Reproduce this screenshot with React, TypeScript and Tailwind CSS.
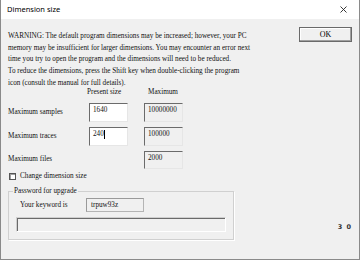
import React from 'react'

const serif = { fontFamily: '"Liberation Serif", "Times New Roman", serif' }

function Field({
  value,
  white,
  caret,
  h = 'h-[19px]',
}: {
  value: string
  white?: boolean
  caret?: boolean
  h?: string
}) {
  return (
    <div
      className={`w-[39px] ${h} border border-t-[#6b6b6b] border-l-[#6b6b6b] border-r-[#e6e6e6] border-b-[#e6e6e6] pl-[3px] pt-[2.5px] leading-[9px] flex items-start ${
        white ? 'bg-white' : 'bg-[#f0f0f0]'
      }`}
    >
      <span>{value}</span>
      {caret && <span className="w-[1px] h-[9px] bg-black ml-[0.5px]" />}
    </div>
  )
}

export default function App() {
  return (
    <div
      className="w-[360px] h-[260px] bg-[#f0f0f0] border-l border-r border-b border-[#8a8a8a] flex flex-col text-[#111] text-[7.2px] overflow-hidden"
      style={serif}
    >
      {/* TITLE */}

      <div
        className="h-[19px] bg-white flex items-center justify-between pl-[6px] pr-[12px] shrink-0"
        style={{ fontFamily: '"Noto Sans", sans-serif' }}
      >
        <span className="text-[7.5px] text-black">Dimension size</span>
        <svg width="7" height="7" viewBox="0 0 7 7">
          <path d="M0.5 0.5 L6.5 6.5 M6.5 0.5 L0.5 6.5" stroke="#222" strokeWidth="0.9" />
        </svg>
      </div>

      {/* BODY */}

      <div className="pl-[7px] flex flex-col">

        <div className="flex items-start pt-[8px]">
          <div className="w-[291px] pt-[4.25px] leading-[11.5px] whitespace-nowrap">
            <div>WARNING: The default program dimensions may be increased; however, your PC</div>
            <div>memory may be insufficient for larger dimensions. You may encounter an error next</div>
            <div>time you try to open the program and the dimensions will need to be reduced.</div>
            <div className="mt-[0.5px]">To reduce the dimensions, press the Shift key when double-clicking the program</div>
            <div>icon (consult the manual for full details).</div>
          </div>
          <button className="w-[53px] h-[15px] border border-[#6a6a6a] bg-[#f0f0f0] shadow-[inset_-1px_-1px_0_#a0a0a0,inset_1px_1px_0_#ffffff] text-[8px] leading-[13px] text-black">
            OK
          </button>
        </div>

        {/* HEADERS */}

        <div className="flex h-[8px] leading-[8px] mt-[-1px]">
          <span className="ml-[79px] w-[61px]">Present size</span>
          <span>Maximum</span>
        </div>

        {/* ROWS */}

        <div className="flex flex-col gap-[5px] mt-[6.5px]">
          <div className="flex items-center">
            <span className="w-[81px]">Maximum samples</span>
            <Field value="1640" white />
            <div className="w-[16px]" />
            <Field value="10000000" />
          </div>
          <div className="flex items-center">
            <span className="w-[81px]">Maximum traces</span>
            <Field value="240" white caret />
            <div className="w-[16px]" />
            <Field value="100000" />
          </div>
          <div className="flex items-center">
            <span className="w-[136px]">Maximum files</span>
            <Field value="2000" h="h-[18px]" />
          </div>
        </div>

        {/* CHECKBOX */}

        <div className="flex items-center h-[8px] mt-[4px]">
          <div className="ml-[1px] w-[7px] h-[7px] border border-[#555] bg-white shadow-[inset_1px_1px_0_#a0a0a0]" />
          <span className="ml-[4px]">Change dimension size</span>
        </div>

        {/* GROUP */}

        <div className="flex items-start mt-[6px]">
          <fieldset className="w-[226px] m-0 p-0 border border-[#d0d0d0] shadow-[1px_1px_0_#ffffff] pb-[7px]">
            <legend className="ml-[4px] px-[1px] leading-[9px]">Password for upgrade</legend>
            <div className="flex items-center ml-[11px] mt-[2.5px]">
              <span className="w-[66px]">Your keyword is</span>
              <div className="w-[58px] h-[14px] border border-[#b4b4b4] border-l-[#9a9a9a] border-t-[#9a9a9a] bg-[#f0f0f0] pl-[4px] leading-[12px]">
                trpuw93z
              </div>
            </div>
            <div className="ml-[7px] mt-[5px] w-[210px] h-[15px] border border-[#cfcfcf] border-r-white border-b-white shadow-[inset_1px_1px_0_#6a6a6a]" />
          </fieldset>
          <span
            className="ml-auto mr-[7px] mt-[36.5px] text-[6.5px] leading-[8px] font-semibold tracking-[1px] text-[#333]"
            style={{ fontFamily: '"DejaVu Sans", sans-serif' }}
          >
            3 0
          </span>
        </div>

      </div>
    </div>
  )
}
